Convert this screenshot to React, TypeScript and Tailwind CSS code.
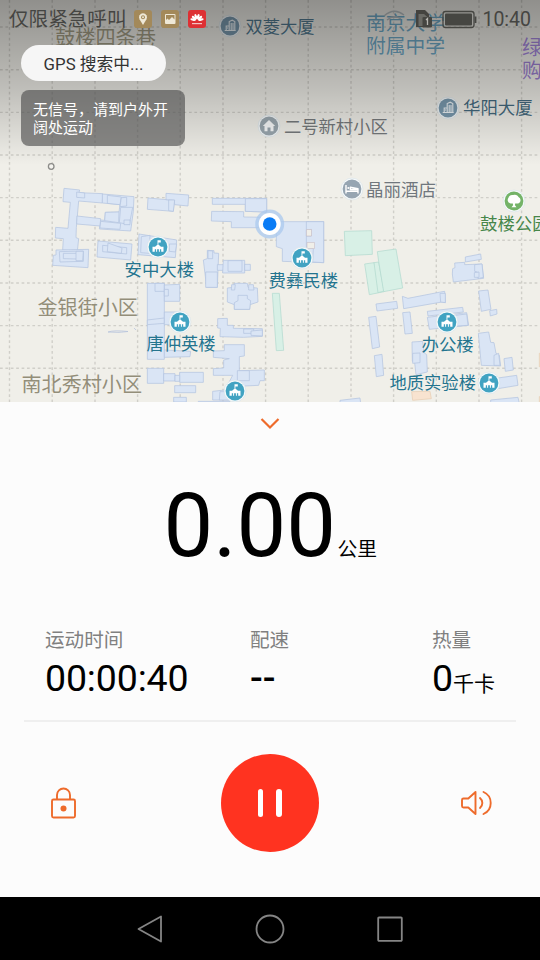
import React from "react";

type Cluster = { x: number; y: number; fill: string; stroke: string; shapes: string[] };

const BLUE = { fill: "#dae5f5", stroke: "#b3c4df" };
const MINT = { fill: "#d8f0e6", stroke: "#b2dacf" };
const PEACH = { fill: "#f8e3d0", stroke: "#e6cdb4" };

// Footprints are drawn at three units per map pixel, relative to each cluster's origin.
const clusters: Cluster[] = [
  {
    x: 0, y: 170, ...BLUE,
    shapes: [
      "192,55 239,60 237,68 308,71 307,99 236,93 229,172 228,203 236,206 232,244 188,240 190,206 166,204 167,172 204,175 211,97 189,95",
      "307,72 402,80 400,124 392,183 298,177 302,150 314,151 316,127 357,126 360,104 307,99",
      "231,138 302,146 300,168 230,162", "230,66 254,69 254,84 230,82", "322,76 322,100 360,104 364,81", "364,83 380,82 380,108 360,110",
      "316,127 357,126 356,158 314,152", "362,112 398,112 388,164 358,158", "372,150 390,150 390,164 372,164", "302,154 362,160 360,178 300,174",
      "168,240 266,238 264,293 158,286 160,256 168,255", "178,245 250,243 250,274 180,276", "190,250 230,250 230,267 190,266", "228,244 250,244 248,272 228,272",
      "294,213 396,222 392,270 291,261", "308,226 380,233 380,252 308,245", "324,219 366,234 364,250 322,245",
      "417,192 530,210 526,263 414,254", "424,200 450,196 448,250 422,248", "508,222 530,222 526,246 508,244",
      "444,84 523,91 520,124 442,118", "498,70 566,75 564,108 524,104 523,91 498,89", "506,90 524,90 520,124 506,122",
    ],
  },
  {
    x: 140, y: 180, ...BLUE,
    shapes: [
      "217,55 380,55 380,96 316,94 316,73 217,73", "316,56 380,56 380,96 316,94",
      "215,94 311,95 311,111 395,112 395,143 274,143 274,125 214,123",
      "409,125 551,125 551,248 427,244 427,206 409,200", "499,125 551,125 551,248 518,246 520,206 499,202", "499,150 514,148 514,168 499,168",
      "202,211 222,212 222,219 236,220 232,322 200,322 190,240 202,236", "204,212 218,213 218,236 204,236", "232,254 250,254 250,271 232,271", "250,241 314,241 314,279 248,279", "264,242 264,274 306,274 306,242", "314,253 331,253 331,271 314,271",
    ],
  },
  {
    x: 130, y: 280, ...BLUE,
    shapes: [
      "52,10 103,10 103,238 52,238", "75,10 75,34 103,34 103,10", "103,15 149,13 149,64 103,64", "103,28 115,28 115,48 103,48", "52,120 103,114 103,130 52,134", "103,96 150,96 150,134 103,134", "103,210 182,214 180,230 103,232",
      "312,10 352,10 354,22 382,24 384,66 360,74 359,88 313,88 313,74 292,66 292,24 312,22", "305,14 316,14 314,30 304,30", "356,14 370,14 372,30 356,30", "324,46 352,46 352,56 362,62 359,88 313,88 313,68 324,62",
      "263,116 292,115 292,136 310,136 310,145 397,146 397,169 340,172 270,170 271,145 263,144", "341,147 371,147 371,160 341,160", "363,153 397,150 397,168 363,166",
      "283,194 343,194 343,228 328,230 328,272 403,270 403,302 390,302 386,316 344,318 332,360 248,360 248,334 285,330 308,286 250,286 250,266 281,264 281,240 298,236 250,232 250,213 283,212",
      "322,272 358,272 358,302 322,302", "270,335 300,335 300,360 268,360",
      "52,265 101,265 101,310 52,310", "101,281 135,281 135,303 101,303", "149,277 220,277 220,307 149,307", "135,286 149,286 149,304 135,304", "134,317 197,317 197,338 134,338", "131,352 169,352 169,366 131,366", "227,-24 262,-24 262,22 227,22",
      "205,364 300,364 300,374 205,374",
    ],
  },
  { x: 130, y: 280, ...MINT, shapes: ["427,40 448,40 461,211 439,212"] },
  { x: 340, y: 180, ...MINT, shapes: ["13,154 95,152 97,223 16,227", "74,252 102,248 132,335 88,344", "102,248 116,246 132,333 114,338", "112,215 168,207 188,324 131,335 116,244"] },
  { x: 340, y: 180, ...BLUE, shapes: ["376,231 422,222 424,238 376,246", "338,266 345,263 344,249 374,247 374,254 426,252 431,295 340,306 337,282", "404,254 426,252 430,292 414,296 412,276 404,274", "403,278 417,276 417,292 403,292"] },
  {
    x: 340, y: 290, ...BLUE,
    shapes: [
      "108,42 170,34 173,55 111,63", "187,19 204,25 302,6 314,4 316,38 306,36 191,56", "300,10 316,10 316,38 302,36",
      "86,82 108,79 119,171 97,176", "188,68 210,66 217,130 195,132", "262,64 368,52 370,66 264,78", "262,82 380,68 386,106 268,118", "346,76 380,72 384,106 348,108",
      "416,3 444,0 453,58 424,64", "449,62 470,58 471,72 451,78", "415,130 446,126 452,157 462,158 468,190 478,196 482,228 424,226", "462,196 476,190 480,226 462,226", "492,206 516,202 520,240 496,244",
      "216,156 248,154 252,188 260,194 262,246 228,254 224,218 217,214", "218,190 240,189 240,218 218,220", "103,197 126,193 131,256 109,260",
      "460,266 530,256 534,286 462,298", "452,330 534,322 538,340 452,344", "0,331 60,324 62,340 0,345",
    ],
  },
  { x: 340, y: 290, ...PEACH, shapes: ["215,305 270,304 274,326 218,331", "598,190 602,190 602,230 598,230", "598,320 602,320 602,345 598,345"] },
];

const columns = [9.5, 52.2, 95, 137.6, 180.2, 223, 265.6, 308.2, 351, 393.6, 436.3, 479, 521.6];
const rows = [27, 69.7, 112.4, 155, 197.6, 240.3, 283, 325.6, 368.3];

function MapTiles() {
  return (
    <svg className="absolute inset-0" width="540" height="403" viewBox="0 0 540 403">
      <rect width="540" height="403" fill="#f0efe9" />
      <g stroke="#d0cfc9" strokeWidth="1.4" strokeDasharray="2.7 2.7" fill="none">
        {columns.map((x) => <path key={x} d={`M${x} 0V403`} />)}
        {rows.map((y) => <path key={y} d={`M0 ${y}H540`} />)}
      </g>
      {clusters.map((c, i) => (
        <g key={i} transform={`translate(${c.x} ${c.y}) scale(.33333)`} fill={c.fill} stroke={c.stroke} strokeWidth="2.2">
          {c.shapes.map((points, n) => <polygon key={n} points={points} />)}
        </g>
      ))}
      <g fill="#f0efe9" stroke="#c9bdc4" strokeWidth=".6">
        <path d="M306.5 229.5h5v6.5h-5zM307 242.500h7.500v6h-7.500z" />
      </g>
      <path d="M108 332q6-2 20-.5q-8 1.500-20 .5M134 328l2 2" fill="none" stroke="#b8c4dc" strokeWidth=".8" />
      <circle cx="51.200" cy="166.500" r="2.800" fill="#f4f3ee" stroke="#8c8c89" strokeWidth="1.300" />
    </svg>
  );
}

type PinKind = "school" | "tower" | "house" | "hotel" | "park";
const pinFill: Record<PinKind, string> = { school: "#41a3c2", tower: "#7b9bb0", house: "#9aa7af", hotel: "#96a5b2", park: "#74b368" };

function Pin({ kind, x, y }: { kind: PinKind; x: number; y: number }) {
  return (
    <svg className="absolute" style={{ left: x - 12, top: y - 12 }} width="24" height="24" viewBox="-12 -12 24 24">
      <circle r="10.900" fill="#f8fbfc" stroke="#d5e1e5" strokeWidth=".6" />
      <circle r="9.400" fill={pinFill[kind]} />
      {kind === "school" && (
        <g fill="#fff">
          <path d="M-5.500 4.800v-5h2.500l3-2.600 3 2.600h2.500v5h-2.300v-2.600h-1.300v2.600h-1v-2.600h-1.800v2.600h-1v-2.600h-1.300v2.600z" />
          <path d="M-.5-2.500v-4.200h3.300v2.200H.4v2z" />
        </g>
      )}
      {kind === "tower" && (
        <g fill="none" stroke="#eff5f8" strokeWidth="1.100">
          <path d="M-.8 4.500v-9l3-1.300 2.600 1.300v9zM1.200-3v7M3-3v7M-.8 0h-3v4.500h-1.500h11" />
          <path d="M-3 2h1.200" />
        </g>
      )}
      {kind === "house" && <path d="M-6.200 0 0-6l6.200 6h-1.700v5.200h-3V1.500h-3v3.700h-3V0z" fill="#f8fafb" />}
      {kind === "hotel" && (
        <g fill="none" stroke="#fff" strokeWidth="1.400">
          <path d="M-6-4v8.500M-6 2.200H6v2.300M6 2V-.2L-1.700-1.700v2.200H6" strokeLinejoin="round" />
          <circle cx="-3.700" cy="-1" r="1" fill="#fff" stroke="none" />
        </g>
      )}
      {kind === "park" && (
        <path d="M-4 2.200a3.400 3.400 0 0 1-1.500-5.400 3.500 3.500 0 0 1 4.500-2.700 4 4 0 0 1 5.500 2 3.400 3.400 0 0 1 .3 6.100q-1.800.8-3.300 0L.8 4 2.500 6.300h-5L-.8 4-1.500 2.200q-1.200.6-2.500 0z" fill="#fff" />
      )}
    </svg>
  );
}

const pins: { kind: PinKind; x: number; y: number }[] = [
  { kind: "tower", x: 230.200, y: 26.300 },
  { kind: "tower", x: 448.200, y: 107.700 },
  { kind: "house", x: 269, y: 126.300 },
  { kind: "hotel", x: 351.500, y: 189 },
  { kind: "park", x: 514, y: 201 },
  { kind: "school", x: 158.300, y: 246.800 },
  { kind: "school", x: 302, y: 258 },
  { kind: "school", x: 180, y: 321.500 },
  { kind: "school", x: 235, y: 390.500 },
  { kind: "school", x: 446.700, y: 322 },
  { kind: "school", x: 489, y: 383 },
];

const labels: { text: string; x: number; y: number; size: number; color: string }[] = [
  { text: "鼓楼四条巷", x: 55, y: 37.500, size: 20.200, color: "#a39e86" },
  { text: "双菱大厦", x: 245.500, y: 27.500, size: 17.300, color: "#527a90" },
  { text: "南京大学", x: 366, y: 24, size: 19.800, color: "#6fa9c6" },
  { text: "附属中学", x: 366, y: 46.500, size: 19.800, color: "#6fa9c6" },
  { text: "绿", x: 522, y: 48, size: 20, color: "#a386da" },
  { text: "购", x: 522, y: 71, size: 20, color: "#9c80cf" },
  { text: "华阳大厦", x: 463, y: 109, size: 17.400, color: "#456b80" },
  { text: "二号新村小区", x: 284, y: 127.500, size: 17.300, color: "#767a7c" },
  { text: "晶丽酒店", x: 366, y: 190.500, size: 17.500, color: "#70777d" },
  { text: "鼓楼公园", x: 480, y: 225, size: 17.400, color: "#46864a" },
  { text: "安中大楼", x: 124.500, y: 270.500, size: 17.400, color: "#24748e" },
  { text: "费彝民楼", x: 268.500, y: 281.500, size: 17.400, color: "#24748e" },
  { text: "唐仲英楼", x: 146.500, y: 345, size: 17.300, color: "#24748e" },
  { text: "办公楼", x: 421.500, y: 345.500, size: 17.400, color: "#24748e" },
  { text: "地质实验楼", x: 389.500, y: 384, size: 17.300, color: "#24748e" },
  { text: "金银街小区", x: 37.500, y: 307.500, size: 20.100, color: "#938e79" },
  { text: "南北秀村小区", x: 21.500, y: 384.500, size: 20.100, color: "#938e79" },
];

function StatusBar() {
  return (
    <header className="flex h-[37px] items-center pl-[9px] pr-[9px] text-[#454542]">
      <span className="w-[125px] whitespace-nowrap pt-0.5 text-[19.600px] leading-none">仅限紧急呼叫</span>
      <div className="flex gap-[9px]">
        <svg width="18" height="18" viewBox="0 0 18 18">
          <rect width="18" height="18" rx="3" fill="#a3895a" />
          <path d="M9 15 5.500 9.200a4 4 0 1 1 7 0z" fill="#eee8d7" />
          <circle cx="9" cy="7.300" r="2" fill="#a3895a" /><circle cx="9" cy="7.300" r="1" fill="#eee8d7" />
        </svg>
        <svg width="18" height="18" viewBox="0 0 18 18">
          <rect width="18" height="18" rx="3" fill="#a3895a" />
          <rect x="4" y="4" width="10.500" height="10" rx="1" fill="#eee8d7" />
          <path d="M5 10V5h8.500v4.500L11 7l-3 3-1.500-1.500z" fill="#a3895a" />
        </svg>
        <svg width="18" height="18" viewBox="0 0 18 18">
          <rect width="18" height="18" rx="3" fill="#de3034" />
          <g fill="#fff">
            {[-78, -48, -17, 17, 48, 78].map((a) => <ellipse key={a} cx="9" cy="6.500" rx="1.200" ry="2.800" transform={`rotate(${a} 9 10.500)`} />)}
            <rect x="4" y="13" width="10" height="1.200" opacity=".7" />
          </g>
        </svg>
      </div>
      <svg className="ml-auto" width="95" height="24" viewBox="382 6 95 24">
        <path d="M383 15q10-9 20-1M386 19q7-6 14-1" fill="none" stroke="#73787a" strokeWidth="1.300" />
        <path d="M415 9h9l4 4v3h-6v10h-7z" fill="#44433f" />
        <path d="M417.500 13h5.500l4.500 4v8h-10z" fill="#777773" opacity=".75" />
        <rect x="421.500" y="16" width="9.500" height="10.500" rx="1" fill="#454541" />
        <path d="M425 19 426.500 17.500v6.500" fill="none" stroke="#b6b5b0" strokeWidth="1.300" />
        <rect x="442" y="10.500" width="31" height="16" rx="2.500" fill="none" stroke="#464642" strokeWidth="1.300" />
        <rect x="444" y="12.500" width="27" height="12" rx="1" fill="#464642" />
        <path d="M474.500 15.500v6.500" stroke="#464642" strokeWidth="1.800" />
      </svg>
      <span className="ml-[4px] pt-0.5 text-[19.500px] leading-none">10:40</span>
    </header>
  );
}

function MapView() {
  return (
    <section className="relative h-[402px] shrink-0 overflow-hidden">
      <MapTiles />
      {labels.map((l) => (
        <span
          key={l.text}
          className="absolute -translate-y-1/2 whitespace-nowrap leading-none [text-shadow:0_0_2px_#ffffff66]"
          style={{ left: l.x, top: l.y, fontSize: l.size, color: l.color }}
        >
          {l.text}
        </span>
      ))}
      {pins.map((p) => <Pin key={`${p.x}-${p.y}`} {...p} />)}
      <svg className="absolute left-[253px] top-[207px]" width="34" height="34" viewBox="-17 -17 34 34">
        <circle cx="-.3" r="14.500" fill="#a9c8ee" opacity=".75" />
        <circle cx="-.3" r="11" fill="#fff" />
        <circle cx="-.3" r="6.800" fill="#0a7cf5" />
      </svg>
      <div className="absolute inset-x-0 top-0 h-[165px] bg-linear-to-b from-black/40 via-black/20 via-55% to-transparent" />
      <div className="relative">
        <StatusBar />
        <div className="ml-[21px] mt-2 flex h-9 w-[145px] items-center justify-center rounded-full bg-[#f6f6f6] pt-[3px] text-[16.800px] text-[#333]">
          GPS 搜索中...
        </div>
        <div className="ml-[21px] mt-[9px] flex h-14 w-[164px] items-center rounded-lg bg-[#505050]/65 pl-3 pt-[3px] text-[15px] leading-[17.500px] text-white">
          <p>无信号，请到户外开<br />阔处运动</p>
        </div>
      </div>
    </section>
  );
}

function Stat({ label, children, className }: { label: string; children: React.ReactNode; className: string }) {
  return (
    <div className={className}>
      <div className="text-[19.600px] leading-6 text-[#808080]">{label}</div>
      <div className="mt-[3px] whitespace-nowrap text-[37.500px] leading-[44px]">{children}</div>
    </div>
  );
}

export default function App() {
  return (
    <div className="flex h-[960px] w-[540px] flex-col overflow-hidden bg-[#fcfcfc] font-['Roboto','Noto_Sans_CJK_SC',sans-serif] text-black">
      <MapView />
      <main className="flex h-[495px] shrink-0 flex-col">
        <div className="flex h-[42px] justify-center pt-[15px]">
          <svg width="20" height="14" viewBox="0 0 20 14">
            <path d="m1.500 2 8.500 8.500 8.500-8.500" fill="none" stroke="#ee6b2b" strokeWidth="2.200" />
          </svg>
        </div>
        <div className="flex h-[160px] items-baseline pl-[163.500px] pt-[30px]">
          <span className="w-[174px] text-[88.500px] leading-[105px]">0.00</span>
          <span className="text-[19.800px] leading-none">公里</span>
        </div>
        <div className="mx-6 flex h-[118px] border-b-2 border-[#efefef] pl-[21px] pt-[25px]">
          <Stat label="运动时间" className="w-[205px]"><span className="tracking-[-0.15px]">00:00:40</span></Stat>
          <Stat label="配速" className="w-[182px]"><span className="font-medium">--</span></Stat>
          <Stat label="热量" className="">0<span className="text-[21px]">千卡</span></Stat>
        </div>
        <div className="flex items-center justify-between pl-[50px] pr-[47px] pt-[32px]">
          <svg width="27" height="32" viewBox="0 0 27 32" fill="none" stroke="#ee6b2b" strokeWidth="1.900">
            <rect x="2" y="12.500" width="23" height="18" rx="1.500" />
            <path d="M7 12.500V8a6.500 6.500 0 0 1 13 0v4.500" />
            <circle cx="13.500" cy="21.500" r="3" fill="#ee6b2b" stroke="none" />
          </svg>
          <button className="ml-[2px] flex size-[98px] items-center justify-center gap-[13px] rounded-full bg-[#ff3320]" aria-label="暂停">
            <span className="h-7 w-[5.500px] rounded-full bg-white" />
            <span className="h-7 w-[5.500px] rounded-full bg-white" />
          </button>
          <svg width="33" height="26" viewBox="0 0 33 26" fill="none" stroke="#ee6b2b" strokeWidth="1.900" strokeLinecap="round" strokeLinejoin="round">
            <path d="M3.500 8.500h4.800L15.500 2v22l-7.200-6.500H3.500Q2 17.500 2 16v-6q0-1.500 1.500-1.500zM20 8a6.500 6.500 0 0 1 0 10M23.500 2a12 12 0 0 1 0 22" />
          </svg>
        </div>
      </main>
      <nav className="flex h-[63px] shrink-0 items-center justify-center gap-[90px] bg-black">
        {["M26 2.500v25L3.500 15z", "M15 1.500a13.500 13.500 0 1 1 0 27a13.500 13.500 0 1 1 0-27z", "M4 3.500h22a.8.8 0 0 1 .8.8v21.700a.8.8 0 0 1-.8.8H4a.8.8 0 0 1-.8-.8V4.300a.8.8 0 0 1 .8-.8z"].map((d) => (
          <svg key={d} width="30" height="30" viewBox="0 0 30 30">
            <path d={d} fill="none" stroke="#858585" strokeWidth="1.800" strokeLinejoin="round" />
          </svg>
        ))}
      </nav>
    </div>
  );
}
